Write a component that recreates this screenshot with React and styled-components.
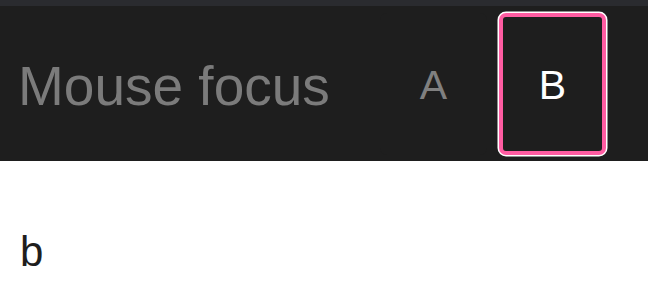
import React, { useState } from "react";
import styled, { createGlobalStyle } from "styled-components";

const Global = createGlobalStyle`
  html, body { margin: 0; padding: 0; background: #ffffff; }
  body { font-family: "Liberation Sans", Arial, sans-serif; }
`;

const Page = styled.div`
  width: 648px;
  height: 300px;
  overflow: hidden;
  display: flex;
  flex-direction: column;
`;

const TopStrip = styled.div`
  height: 6px;
  background: #2a2b2f;
`;

const Header = styled.header`
  height: 155px;
  background: #1e1e1e;
  display: flex;
  align-items: center;
  justify-content: space-between;
  padding: 0 42px 0 18px;
  box-sizing: border-box;
`;

const Title = styled.h1`
  margin: 4px 0 0;
  font-size: 55px;
  font-weight: 400;
  color: #7b7b7b;
  letter-spacing: 0;
`;

const Tabs = styled.div`
  display: flex;
  gap: 12px;
  align-items: center;
`;

const Tab = styled.button`
  width: 107px;
  height: 142px;
  box-sizing: border-box;
  background: #1e1e1e;
  border: 4px solid ${(p) => (p.$focused ? "#ff5ca2" : "transparent")};
  box-shadow: ${(p) => (p.$focused ? "0 0 0 1.5px #ffffff" : "none")};
  border-radius: 7px;
  color: ${(p) => (p.$active ? "#ffffff" : "#808080")};
  font-family: "Liberation Sans", Arial, sans-serif;
  font-size: 41px;
  padding: 4px 0 0;
  cursor: pointer;
  outline: none;
`;

const Content = styled.main`
  padding: 67px 0 0 20px;
  font-size: 42px;
  color: #1e1e1e;
`;

export default function App() {
  const [active, setActive] = useState("b");
  return (
    <Page>
      <Global />
      <TopStrip />
      <Header>
        <Title>Mouse focus</Title>
        <Tabs>
          <Tab $active={active === "a"} $focused={active === "a"} onClick={() => setActive("a")}>A</Tab>
          <Tab $active={active === "b"} $focused={active === "b"} onClick={() => setActive("b")}>B</Tab>
        </Tabs>
      </Header>
      <Content>{active}</Content>
    </Page>
  );
}
